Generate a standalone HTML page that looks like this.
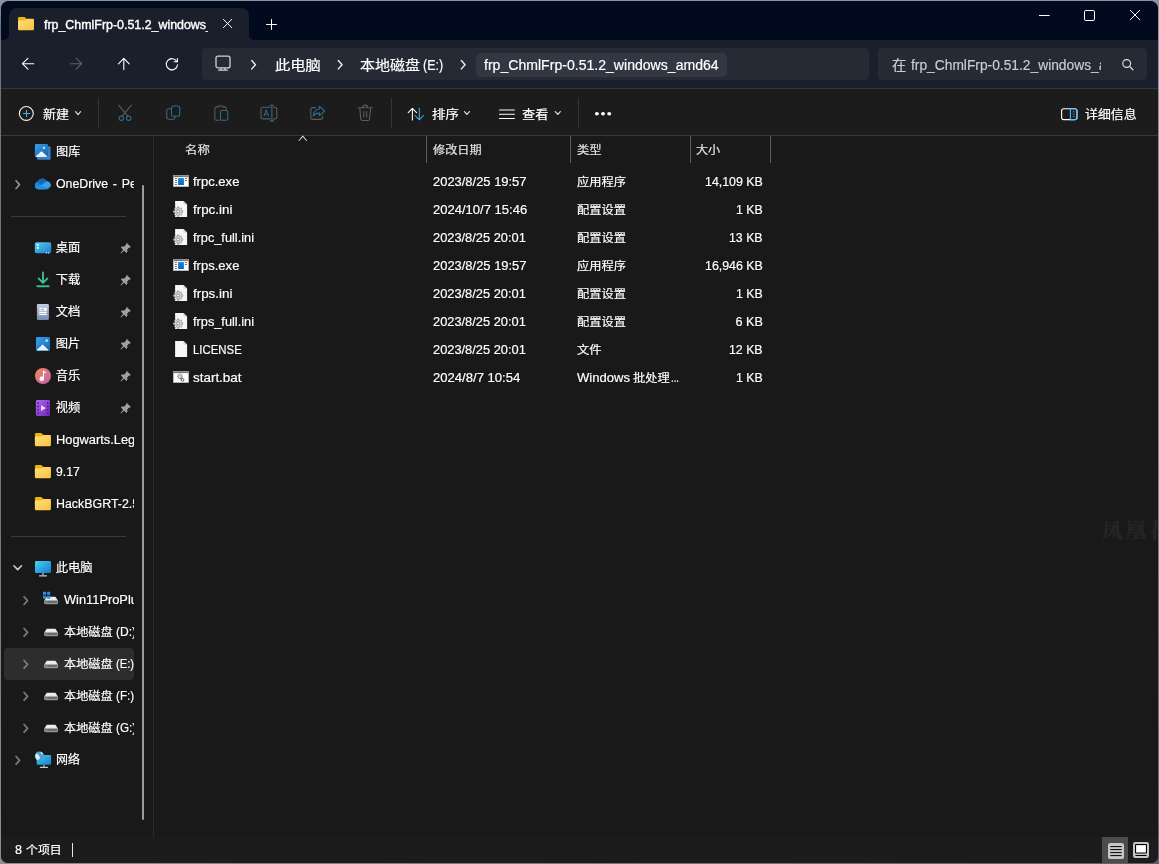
<!DOCTYPE html>
<html lang="zh-CN">
<head>
<meta charset="utf-8">
<title>frp_ChmlFrp-0.51.2_windows_amd64</title>
<style>
*{box-sizing:border-box;margin:0;padding:0}
html,body{width:1159px;height:864px;overflow:hidden}
body{background:#8b93a3;font-family:"Liberation Sans","Noto Sans CJK SC",sans-serif;font-size:12px;color:#fff;position:relative}
#win{position:absolute;left:1px;top:1px;width:1157px;height:862px;border-radius:8px 8px 7px 7px;overflow:hidden;background:#191919}
#o{will-change:transform;position:absolute;left:-1px;top:-1px;width:1159px;height:864px}
#o div,#o span,#o svg{position:absolute}
.t{-webkit-text-stroke:.18px currentColor;white-space:pre;line-height:20px;height:20px;transform-origin:0 50%}
.clip{overflow:hidden}
svg{overflow:visible}
</style>
</head>
<body>
<div style="position:absolute;left:0;top:6px;width:2px;height:858px;background:linear-gradient(180deg,#858c9a 0,#6f7379 20px,#74767b 60%,#8d8e94 100%)"></div>
<div style="position:absolute;left:1157px;top:6px;width:2px;height:858px;background:linear-gradient(180deg,#8b93a3 0,#7d8190 50%,#5d5f70 100%)"></div>
<div style="position:absolute;left:0;top:856px;width:1159px;height:8px;background:linear-gradient(90deg,#8d8e94 0,#74767f 50%,#5d5f70 100%)"></div>
<div id="win"><div id="o">
<div style="left:0px;top:0px;width:1159px;height:40px;background:#020a20;"></div>
<div style="left:8.5px;top:8px;width:240.5px;height:32px;background:#1a1f2b;border-radius:8px 8px 0 0"></div>
<svg style="left:3.5px;top:35px" width="5" height="5" viewBox="0 0 8 8"><path d="M8 0V8H0A8 8 0 0 0 8 0z" fill="#1a1f2b"/></svg>
<svg style="left:249px;top:35px" width="5" height="5" viewBox="0 0 8 8"><path d="M0 0V8H8A8 8 0 0 1 0 0z" fill="#1a1f2b"/></svg>
<svg style="left:18px;top:16px" width="17" height="14.5" viewBox="0 0 17 14.5"><g transform="translate(0 0.7)"><defs><linearGradient id="g1" x1="0" y1="0" x2="1" y2="1"><stop offset="0" stop-color="#ffe07a"/><stop offset="1" stop-color="#f6c23c"/></linearGradient></defs><path d="M0 1.6A1.4 1.4 0 0 1 1.4 .2H6a1.4 1.4 0 0 1 1 .4L8.6 2.2h6A1.4 1.4 0 0 1 16 3.6V8H0z" fill="#eeb21c"/><path d="M0 5A1.3 1.3 0 0 1 1.3 3.7H6.2a1.6 1.6 0 0 0 1.1-.45L8 2.6a1.6 1.6 0 0 1 1.1-.45h5.6A1.3 1.3 0 0 1 16 3.45v8.75a1.3 1.3 0 0 1-1.3 1.3H1.3A1.3 1.3 0 0 1 0 12.2z" fill="url(#g1)"/></g></svg>
<div class="clip" style="left:40.00px;top:15.28px;width:167.60px;height:20px;"><span class="t" style="left:3.90px;top:0;font-size:13px;color:#fff;transform:scaleX(0.9541);font-weight:400;-webkit-text-stroke:.4px #fff;">frp_ChmlFrp-0.51.2_windows_</span></div>
<svg style="left:219px;top:15px" width="17" height="17" viewBox="0 0 17 17"><g transform="translate(0.6 0.5)"><path d="M3.80 3.80L12.20 12.20M12.20 3.80L3.80 12.20" stroke="#fff" stroke-width="1.0" stroke-linecap="round"/></g></svg>
<svg style="left:263px;top:16px" width="17" height="17" viewBox="0 0 17 17"><g transform="translate(0.5 0.5)"><path d="M8 3.00V13.00M3.00 8H13.00" stroke="#fff" stroke-width="1.0" stroke-linecap="round"/></g></svg>
<svg style="left:1038.500px;top:14.900px" width="11" height="1" viewBox="0 0 11 1"><rect width="10.600" height="1" fill="#fff"/></svg>
<svg style="left:1083.500px;top:9.500px" width="11" height="11" viewBox="0 0 11 11"><rect x=".5" y=".5" width="10" height="10" rx="1.300" fill="none" stroke="#fff" stroke-width="1"/></svg>
<svg style="left:1127px;top:7px" width="17" height="17" viewBox="0 0 17 17"><path d="M3.30 3.30L12.70 12.70M12.70 3.30L3.30 12.70" stroke="#fff" stroke-width="1.0" stroke-linecap="round"/></svg>
<div style="left:0px;top:40px;width:1159px;height:48px;background:#1a1f2b;"></div>
<div style="left:0px;top:88px;width:1159px;height:1px;background:#33363e;"></div>
<svg style="left:20px;top:55px" width="17" height="17" viewBox="0 0 17 17"><g transform="translate(0 0.7)"><path d="M13.7 8H2.5M7.9 2.6L2.4 8l5.5 5.4" fill="none" stroke="#fff" stroke-width="1.1" stroke-linecap="round" stroke-linejoin="round"/></g></svg>
<svg style="left:68px;top:55px" width="17" height="17" viewBox="0 0 17 17"><g transform="translate(0.1 0.7)"><path d="M2.3 8H13.5M8.1 2.6L13.6 8l-5.500 5.400" fill="none" stroke="#5f636d" stroke-width="1.1" stroke-linecap="round" stroke-linejoin="round"/></g></svg>
<svg style="left:115px;top:56px" width="17" height="17" viewBox="0 0 17 17"><g transform="translate(0.8 0)"><path d="M8 13.600V2.500M2.600 7.900L8 2.400l5.400 5.500" fill="none" stroke="#fff" stroke-width="1.1" stroke-linecap="round" stroke-linejoin="round"/></g></svg>
<svg style="left:164px;top:56px" width="17" height="17" viewBox="0 0 17 17"><path d="M13.500 8.700A5.600 5.600 0 1 1 12.900 5.700" fill="none" stroke="#fff" stroke-width="1.1" stroke-linecap="round"/><path d="M13.400 2.500V5.800H10.200" fill="none" stroke="#fff" stroke-width="1.1" stroke-linecap="round" stroke-linejoin="round"/></svg>
<div style="left:202px;top:48px;width:667px;height:32px;background:#252a35;border-radius:4px"></div>
<svg style="left:215px;top:55px" width="17" height="17" viewBox="0 0 17 17"><g transform="translate(0.3 0.4)"><rect x=".7" y=".7" width="14" height="11.800" rx="2" fill="none" stroke="#d0d3da" stroke-width="1.3"/><path d="M5.800 12.700v1.800M9.600 12.700v1.800" stroke="#d0d3da" stroke-width="1.2" fill="none"/><path d="M3.300 14.700h8.800" stroke="#d0d3da" stroke-width="1.200" stroke-linecap="round" fill="none"/></g></svg>
<svg style="left:248px;top:58px" width="11" height="13" viewBox="0 0 11 13"><g transform="translate(0.6 0.7)"><path d="M3.14 1.82L6.86 6L3.14 10.18" fill="none" stroke="#ececf0" stroke-width="1.45" stroke-linecap="round" stroke-linejoin="round"/></g></svg>
<span class="t" style="left:275.30px;top:55.09px;font-size:14px;color:#fff;transform:scaleX(1.0905);">此电脑</span>
<svg style="left:335px;top:58px" width="11" height="13" viewBox="0 0 11 13"><g transform="translate(0.2 0.7)"><path d="M3.14 1.82L6.86 6L3.14 10.18" fill="none" stroke="#ececf0" stroke-width="1.45" stroke-linecap="round" stroke-linejoin="round"/></g></svg>
<span class="t" style="left:360.00px;top:55.09px;font-size:14px;color:#fff;transform:scaleX(1.0714);">本地磁盘</span>
<span class="t" style="left:423.00px;top:55.09px;font-size:14px;color:#fff;transform:scaleX(0.8909);">(E:)</span>
<svg style="left:458px;top:58px" width="11" height="13" viewBox="0 0 11 13"><g transform="translate(0.2 0.7)"><path d="M3.14 1.82L6.86 6L3.14 10.18" fill="none" stroke="#ececf0" stroke-width="1.45" stroke-linecap="round" stroke-linejoin="round"/></g></svg>
<div style="left:475.5px;top:53px;width:251px;height:24.3px;background:#323743;border-radius:5px"></div>
<span class="t" style="left:483.80px;top:55.09px;font-size:14px;color:#fff;transform:scaleX(1.0053);">frp_ChmlFrp-0.51.2_windows_amd64</span>
<div style="left:877.5px;top:48px;width:269.5px;height:32px;background:#252a35;border-radius:4px"></div>
<span class="t" style="left:891.80px;top:56.18px;font-size:13.6px;color:#c9ccd3;transform:scaleX(1.0520);">在</span>
<div class="clip" style="left:890.00px;top:55.09px;width:211.20px;height:20px;"><span class="t" style="left:20.70px;top:0;font-size:14px;color:#c9ccd3;transform:scaleX(0.9847);">frp_ChmlFrp-0.51.2_windows_a</span></div>
<svg style="left:1122px;top:58px" width="13" height="13" viewBox="0 0 13 13"><g transform="translate(0.1 0.9)"><circle cx="4.600" cy="4.600" r="3.900" fill="none" stroke="#e0e2e8" stroke-width="1.15"/><path d="M7.500 7.500L10.800 10.800" stroke="#e0e2e8" stroke-width="1.3" stroke-linecap="round"/></g></svg>
<div style="left:0px;top:89px;width:1159px;height:46px;background:#1c1c1c;"></div>
<div style="left:0px;top:135px;width:1159px;height:1px;background:#393939;"></div>
<svg style="left:18px;top:105px" width="18" height="18" viewBox="0 0 18 18"><circle cx="8.300" cy="8.450" r="6.950" fill="none" stroke="#f4f4f4" stroke-width="1.1"/><path d="M8.500 5v7M5 8.500h7" stroke="#45b4f0" stroke-width="1" stroke-linecap="butt"/></svg>
<span class="t" style="left:42.70px;top:104.97px;font-size:12.4px;color:#fff;transform:scaleX(1.0492);-webkit-text-stroke:.2px #fff;">新建</span>
<svg style="left:72px;top:108px" width="13" height="11" viewBox="0 0 13 11"><g transform="translate(0.05 0.1)"><path d="M3.50 3.55L6 6.45L8.50 3.55" fill="none" stroke="#d8d8d8" stroke-width="1.25" stroke-linecap="round" stroke-linejoin="round"/></g></svg>
<div style="left:98px;top:98px;width:1px;height:30px;background:#333;"></div>
<svg style="left:117px;top:104px" width="17" height="19" viewBox="0 0 17 19"><path d="M1.600 1.200L11 12.300M14.400 1.200L5 12.300" stroke="#5c5c5c" stroke-width="1.1" stroke-linecap="round" fill="none"/><circle cx="4.300" cy="14.200" r="2.200" fill="none" stroke="#2d6d90" stroke-width="1.1"/><circle cx="11.700" cy="14.200" r="2.200" fill="none" stroke="#2d6d90" stroke-width="1.1"/></svg>
<svg style="left:165px;top:105px" width="17" height="17" viewBox="0 0 17 17"><g transform="translate(0.2 0)"><path d="M5.3 3.8H3.3A1.8 1.8 0 0 0 1.5 5.6v6.8a1.8 1.8 0 0 0 1.8 1.8h4.6a1.8 1.8 0 0 0 1.8-1.8v-1" fill="none" stroke="#5c5c5c" stroke-width="1.1" stroke-linecap="round"/><rect x="6.3" y="1" width="8.2" height="10.2" rx="1.8" fill="none" stroke="#2d6d90" stroke-width="1.1"/></g></svg>
<svg style="left:213px;top:105px" width="16.2" height="17.1" viewBox="0 0 17.053 18.056"><g transform="translate(0.421 0)"><path d="M6 16H3.3A1.8 1.8 0 0 1 1.5 14.2V3.8A1.8 1.8 0 0 1 3.3 2H5.2M9.8 2h1.9a1.8 1.8 0 0 1 1.8 1.8v1.3" fill="none" stroke="#5c5c5c" stroke-width="1.1" stroke-linecap="round"/><path d="M5 2.4A1.7 1.7 0 0 1 6.7 .8h1.6A1.7 1.7 0 0 1 10 2.4" fill="none" stroke="#5c5c5c" stroke-width="1.1"/><rect x="7.4" y="5.8" width="7.8" height="10.4" rx="1.6" fill="none" stroke="#2d6d90" stroke-width="1.1"/></g></svg>
<svg style="left:260px;top:104px" width="19" height="18" viewBox="0 0 19 18"><g transform="translate(0 0.5)"><path d="M10.2 14.4H3.2A2.2 2.2 0 0 1 1 12.2V5A2.2 2.2 0 0 1 3.2 2.8h7M13.6 2.8h1A2.2 2.2 0 0 1 16.8 5v7.2a2.2 2.2 0 0 1-2.2 2.2h-1" fill="none" stroke="#5c5c5c" stroke-width="1.1" stroke-linecap="round"/><path d="M4 11.6L6.3 5.4 8.6 11.6M4.8 9.6h3" fill="none" stroke="#2d6d90" stroke-width="1" stroke-linecap="round" stroke-linejoin="round"/><path d="M11.9 1V16.2M10.2 .8h3.4M10.2 16.4h3.4" stroke="#2d6d90" stroke-width="1.1" stroke-linecap="round"/></g></svg>
<svg style="left:309px;top:105px" width="17" height="17" viewBox="0 0 17 17"><g transform="translate(0.4 0.4)"><path d="M6 2.2H3.6A2.2 2.2 0 0 0 1.4 4.4v7.4A2.2 2.2 0 0 0 3.6 14h7.4a2.2 2.2 0 0 0 2.2-2.2V11" fill="none" stroke="#5c5c5c" stroke-width="1.1" stroke-linecap="round"/><path d="M10 .9L15.3 5.6 10 10.3V7.7C6.8 7.6 5 8.6 3.8 10.6 4 7 6 4 10 3.6z" fill="none" stroke="#2d6d90" stroke-width="1.1" stroke-linejoin="round"/></g></svg>
<svg style="left:357px;top:104px" width="17" height="18" viewBox="0 0 17 18"><g transform="translate(0.2 0.5)"><path d="M.9 3.2H15.1M5.6 3A2.4 2.4 0 0 1 10.4 3M2.6 3.4l1 11A1.8 1.8 0 0 0 5.4 16h5.2a1.8 1.8 0 0 0 1.8-1.6l1-11M6.6 6.8v5.6M9.4 6.8v5.6" fill="none" stroke="#5c5c5c" stroke-width="1.1" stroke-linecap="round"/></g></svg>
<div style="left:391px;top:98px;width:1px;height:30px;background:#333;"></div>
<svg style="left:407px;top:107px" width="18" height="15" viewBox="0 0 18 15"><g transform="translate(0.7 0.1)"><path d="M4.700 12.800V1.300M.5 5.500L4.700 1.200 8.900 5.500" fill="none" stroke="#fff" stroke-width="1.05" stroke-linecap="round" stroke-linejoin="round"/><path d="M11.600 1.100V12.600M7.400 8.400l4.200 4.300 4.200-4.300" fill="none" stroke="#45aae4" stroke-width="1.05" stroke-linecap="round" stroke-linejoin="round"/></g></svg>
<span class="t" style="left:431.50px;top:104.97px;font-size:12.4px;color:#fff;transform:scaleX(1.0815);-webkit-text-stroke:.2px #fff;">排序</span>
<svg style="left:460px;top:108px" width="13" height="11" viewBox="0 0 13 11"><g transform="translate(0.9 0)"><path d="M3.50 3.55L6 6.45L8.50 3.55" fill="none" stroke="#d8d8d8" stroke-width="1.25" stroke-linecap="round" stroke-linejoin="round"/></g></svg>
<svg style="left:498px;top:108px" width="19" height="13" viewBox="0 0 19 13"><path d="M1.500 1.900H16.400M1.500 6.300H16.400M1.500 10.500H16.400" stroke="#fff" stroke-width="1.05" stroke-linecap="round"/></svg>
<span class="t" style="left:522.40px;top:104.97px;font-size:12.4px;color:#fff;transform:scaleX(1.0613);-webkit-text-stroke:.2px #fff;">查看</span>
<svg style="left:551px;top:108px" width="13" height="11" viewBox="0 0 13 11"><g transform="translate(0.8 0)"><path d="M3.50 3.55L6 6.45L8.50 3.55" fill="none" stroke="#d8d8d8" stroke-width="1.25" stroke-linecap="round" stroke-linejoin="round"/></g></svg>
<div style="left:578px;top:98px;width:1px;height:30px;background:#333;"></div>
<svg style="left:594px;top:111px" width="19" height="6" viewBox="0 0 19 6"><g transform="translate(0 0.2)"><ellipse cx="2.900" cy="2.500" rx="2" ry="1.700" fill="#fff"/><ellipse cx="9" cy="2.500" rx="2" ry="1.700" fill="#fff"/><ellipse cx="15.200" cy="2.500" rx="2" ry="1.700" fill="#fff"/></g></svg>
<svg style="left:1061px;top:108px" width="18" height="13" viewBox="0 0 18 13"><g transform="translate(0 0.2)"><rect x=".6" y=".6" width="15.4" height="10.8" rx="2.2" fill="none" stroke="#fff" stroke-width="1.1"/><path d="M9.4 .6h4.4A2.2 2.2 0 0 1 16 2.8v6.4a2.2 2.2 0 0 1-2.2 2.2H9.4z" fill="none" stroke="#4cc2ff" stroke-width="1.1"/><path d="M11.700 3.600h2M11.700 6h2M11.700 8.400h2" stroke="#4cc2ff" stroke-width=".7"/></g></svg>
<span class="t" style="left:1084.60px;top:104.97px;font-size:12.4px;color:#fff;transform:scaleX(1.0391);-webkit-text-stroke:.2px #fff;">详细信息</span>
<div style="left:153px;top:136px;width:1px;height:701px;background:#2c2c2c;"></div>
<svg style="left:34px;top:143px" width="18" height="18" viewBox="0 0 18 18"><g transform="translate(0.6 0.6)"><defs><linearGradient id="g2" x1="0" y1="0" x2="1" y2="1"><stop offset="0" stop-color="#3aa0e8"/><stop offset="1" stop-color="#1560a8"/></linearGradient></defs><rect x="2.4" y="2.6" width="13.6" height="13.6" rx="1.3" fill="#3b7fc4"/><rect x=".3" y=".5" width="13.2" height="13.2" rx="1.3" fill="url(#g2)"/><path d="M1 13.2L6.9 7.6l5.9 5.6z" fill="#fff"/><path d="M1 13.2l3-2.8h5.8l3 2.8z" fill="#e4effa"/><rect x="8.3" y="3.2" width="2.2" height="2.2" fill="#9fe6ff"/></g></svg>
<span class="t" style="left:56.10px;top:141.77px;font-size:12.3px;color:#fff;transform:scaleX(0.9915);">图库</span>
<svg style="left:12px;top:178px" width="11" height="13" viewBox="0 0 11 13"><g transform="translate(0.8 0.6)"><path d="M3.27 2.11L6.73 6L3.27 9.89" fill="none" stroke="#8c8c8c" stroke-width="1.7" stroke-linecap="round" stroke-linejoin="round"/></g></svg>
<svg style="left:34px;top:178px" width="18" height="12.4" viewBox="0 0 18 12.4"><g transform="translate(0.2 0)"><path d="M4.3 11.2A3.9 3.9 0 0 1 3.6 3.5 5 5 0 0 1 12.6 3.3 4.1 4.1 0 0 1 13.1 11.2z" fill="#1a86d8"/><path d="M3.6 3.5A5 5 0 0 1 12.6 3.3l-6 4.2z" fill="#1268b8"/><path d="M6.3 7.6l6.3-4.3A4.1 4.1 0 0 1 16.6 8.6L9.6 11.2H4.3A3.9 3.9 0 0 1 .9 9.2z" fill="#3c9fe8"/><path d="M1 9.3l5.3-1.7 8.6 2.9a4 4 0 0 1-1.8 .7H4.3A3.9 3.9 0 0 1 1 9.3z" fill="#2390e0"/></g></svg>
<div class="clip" style="left:50.00px;top:173.57px;width:84.00px;height:20px;"><span class="t" style="left:5.90px;top:0;font-size:12.5px;color:#fff;transform:scaleX(0.9878);word-spacing:1.3px;">OneDrive - Pe</span></div>
<div style="left:11px;top:216px;width:115px;height:1px;background:#3a3a3a;"></div>
<svg style="left:34px;top:242px" width="18" height="13" viewBox="0 0 18 13"><g transform="translate(0.6 0)"><defs><linearGradient id="g3" x1="0" y1="0" x2="1" y2="1"><stop offset="0" stop-color="#58d0f4"/><stop offset="1" stop-color="#1b7cc4"/></linearGradient></defs><rect x=".2" y=".2" width="16.4" height="11" rx="1.6" fill="url(#g3)"/><rect x="2.2" y="2" width="2" height="1.8" fill="#e8fbff"/><rect x="2.2" y="5" width="2" height="1.8" fill="#e8fbff"/><rect x="11.3" y="10.4" width="1.1" height="1.1" fill="#e8fbff"/><rect x="13.5" y="10.4" width="1.1" height="1.1" fill="#e8fbff"/></g></svg>
<span class="t" style="left:55.70px;top:237.67px;font-size:12.3px;color:#fff;">桌面</span>
<svg style="left:120px;top:242px" width="12" height="12" viewBox="0 0 12 12"><g transform="translate(0.3 0.5)"><path d="M6.600 .4L10.600 4.400 9.700 5.300 8.900 5.100 6.900 7.100 7.100 9.500 6.100 10.500 3.800 8.200 .6 10.900 .2 10.500 2.900 7.300 .5 4.900 1.500 3.900 3.900 4.100 5.900 2.100 5.700 1.300z" fill="#9aa0a6"/></g></svg>
<svg style="left:37px;top:271px" width="13" height="17" viewBox="0 0 13 17"><g transform="translate(0 0.6)"><path d="M6 .8V11M1.6 6.8L6 11.2l4.4-4.4" fill="none" stroke="#3fc49c" stroke-width="1.8" stroke-linecap="round" stroke-linejoin="round"/><path d="M.3 14.6H11.7" stroke="#36b98f" stroke-width="1.9" stroke-linecap="round"/></g></svg>
<span class="t" style="left:55.70px;top:269.67px;font-size:12.3px;color:#fff;">下载</span>
<svg style="left:120px;top:274px" width="12" height="12" viewBox="0 0 12 12"><g transform="translate(0.3 0.5)"><path d="M6.600 .4L10.600 4.400 9.700 5.300 8.900 5.100 6.900 7.100 7.100 9.500 6.100 10.500 3.800 8.200 .6 10.900 .2 10.500 2.900 7.300 .5 4.900 1.500 3.900 3.900 4.100 5.900 2.100 5.700 1.300z" fill="#9aa0a6"/></g></svg>
<svg style="left:36px;top:304px" width="13" height="17" viewBox="0 0 13 17"><g transform="translate(0.9 0)"><defs><linearGradient id="g4" x1="0" y1="0" x2="0" y2="1"><stop offset="0" stop-color="#c2cee2"/><stop offset="1" stop-color="#748bb0"/></linearGradient></defs><rect x="0" y="0" width="12" height="16" rx="1.3" fill="url(#g4)"/><path d="M2.3 4.4h3.4M2.3 6.3h3.4M2.3 8.4h7.4M2.3 10.4h7.4" stroke="#fff" stroke-width="1.1"/><rect x="6.8" y="3.8" width="3" height="3" fill="#fff"/></g></svg>
<span class="t" style="left:55.70px;top:301.67px;font-size:12.3px;color:#fff;">文档</span>
<svg style="left:120px;top:306px" width="12" height="12" viewBox="0 0 12 12"><g transform="translate(0.3 0.5)"><path d="M6.600 .4L10.600 4.400 9.700 5.300 8.900 5.100 6.900 7.100 7.100 9.500 6.100 10.500 3.800 8.200 .6 10.900 .2 10.500 2.900 7.300 .5 4.900 1.500 3.900 3.900 4.100 5.900 2.100 5.700 1.300z" fill="#9aa0a6"/></g></svg>
<svg style="left:36px;top:337px" width="15" height="15" viewBox="0 0 15 15"><g transform="translate(0 0.1)"><defs><linearGradient id="g5" x1="0" y1="0" x2="1" y2="1"><stop offset="0" stop-color="#35a2ec"/><stop offset="1" stop-color="#1568b8"/></linearGradient></defs><rect width="14" height="14" rx="1.4" fill="url(#g5)"/><path d="M.8 13.2L6.6 7.3l5.9 5.9z" fill="#fff"/><path d="M.8 13.2l2.8-2.8h6l2.9 2.8z" fill="#e2eefb"/><rect x="9.6" y="2.4" width="2.2" height="2.2" fill="#b8f0ff"/></g></svg>
<span class="t" style="left:55.70px;top:333.67px;font-size:12.3px;color:#fff;">图片</span>
<svg style="left:120px;top:338px" width="12" height="12" viewBox="0 0 12 12"><g transform="translate(0.3 0.5)"><path d="M6.600 .4L10.600 4.400 9.700 5.300 8.900 5.100 6.900 7.100 7.100 9.500 6.100 10.500 3.800 8.200 .6 10.900 .2 10.500 2.900 7.300 .5 4.900 1.500 3.900 3.900 4.100 5.900 2.100 5.700 1.300z" fill="#9aa0a6"/></g></svg>
<svg style="left:35px;top:368px" width="17" height="17" viewBox="0 0 17 17"><defs><linearGradient id="g6" x1="0" y1="0" x2="1" y2="1"><stop offset="0" stop-color="#f48a58"/><stop offset="1" stop-color="#c060b4"/></linearGradient></defs><circle cx="8" cy="8" r="8" fill="url(#g6)"/><path d="M8 2.800c1.800.3 2.900 1.200 3.200 2.800-.9-.7-1.600-.9-2.200-.9v6a2.200 2.200 0 1 1-1-1.800V2.800z" fill="#fff"/></svg>
<span class="t" style="left:55.70px;top:365.67px;font-size:12.3px;color:#fff;">音乐</span>
<svg style="left:120px;top:370px" width="12" height="12" viewBox="0 0 12 12"><g transform="translate(0.3 0.5)"><path d="M6.600 .4L10.600 4.400 9.700 5.300 8.900 5.100 6.900 7.100 7.100 9.500 6.100 10.500 3.800 8.200 .6 10.900 .2 10.500 2.900 7.300 .5 4.900 1.500 3.900 3.900 4.100 5.900 2.100 5.700 1.300z" fill="#9aa0a6"/></g></svg>
<svg style="left:35px;top:400px" width="15" height="17" viewBox="0 0 15 17"><g transform="translate(0.9 0)"><defs><linearGradient id="g7" x1="0" y1="0" x2="1" y2="1"><stop offset="0" stop-color="#b066ee"/><stop offset="1" stop-color="#7028bc"/></linearGradient></defs><rect width="14" height="16" rx="1.4" fill="url(#g7)"/><rect x="1.3" y="2.2" width="1.7" height="1.7" rx=".4" fill="#4a1a88"/><rect x="11" y="2.2" width="1.7" height="1.7" rx=".4" fill="#4a1a88"/><rect x="1.3" y="5.6" width="1.7" height="1.7" rx=".4" fill="#4a1a88"/><rect x="11" y="5.6" width="1.7" height="1.7" rx=".4" fill="#4a1a88"/><rect x="1.3" y="9" width="1.7" height="1.7" rx=".4" fill="#4a1a88"/><rect x="11" y="9" width="1.7" height="1.7" rx=".4" fill="#4a1a88"/><rect x="1.3" y="12.4" width="1.7" height="1.7" rx=".4" fill="#4a1a88"/><rect x="11" y="12.4" width="1.7" height="1.7" rx=".4" fill="#4a1a88"/><path d="M5.2 5.2L10 8.1 5.2 11z" fill="#f6dcff"/></g></svg>
<span class="t" style="left:55.70px;top:397.67px;font-size:12.3px;color:#fff;">视频</span>
<svg style="left:120px;top:402px" width="12" height="12" viewBox="0 0 12 12"><g transform="translate(0.3 0.5)"><path d="M6.600 .4L10.600 4.400 9.700 5.300 8.900 5.100 6.900 7.100 7.100 9.500 6.100 10.500 3.800 8.200 .6 10.900 .2 10.500 2.900 7.300 .5 4.900 1.500 3.900 3.900 4.100 5.900 2.100 5.700 1.300z" fill="#9aa0a6"/></g></svg>
<svg style="left:34px;top:432px" width="17" height="14.5" viewBox="0 0 17 14.5"><g transform="translate(0.9 0.8)"><defs><linearGradient id="g8" x1="0" y1="0" x2="1" y2="1"><stop offset="0" stop-color="#ffe07a"/><stop offset="1" stop-color="#f6c23c"/></linearGradient></defs><path d="M0 1.6A1.4 1.4 0 0 1 1.4 .2H6a1.4 1.4 0 0 1 1 .4L8.6 2.2h6A1.4 1.4 0 0 1 16 3.6V8H0z" fill="#eeb21c"/><path d="M0 5A1.3 1.3 0 0 1 1.3 3.7H6.2a1.6 1.6 0 0 0 1.1-.45L8 2.6a1.6 1.6 0 0 1 1.1-.45h5.6A1.3 1.3 0 0 1 16 3.45v8.75a1.3 1.3 0 0 1-1.3 1.3H1.3A1.3 1.3 0 0 1 0 12.2z" fill="url(#g8)"/></g></svg>
<div class="clip" style="left:50.00px;top:429.97px;width:84.00px;height:20px;"><span class="t" style="left:6.30px;top:0;font-size:12.5px;color:#fff;transform:scaleX(1.0269);">Hogwarts.Leg</span></div>
<svg style="left:34px;top:464px" width="17" height="14.5" viewBox="0 0 17 14.5"><g transform="translate(0.9 0.8)"><defs><linearGradient id="g9" x1="0" y1="0" x2="1" y2="1"><stop offset="0" stop-color="#ffe07a"/><stop offset="1" stop-color="#f6c23c"/></linearGradient></defs><path d="M0 1.6A1.4 1.4 0 0 1 1.4 .2H6a1.4 1.4 0 0 1 1 .4L8.6 2.2h6A1.4 1.4 0 0 1 16 3.6V8H0z" fill="#eeb21c"/><path d="M0 5A1.3 1.3 0 0 1 1.3 3.7H6.2a1.6 1.6 0 0 0 1.1-.45L8 2.6a1.6 1.6 0 0 1 1.1-.45h5.6A1.3 1.3 0 0 1 16 3.45v8.75a1.3 1.3 0 0 1-1.3 1.3H1.3A1.3 1.3 0 0 1 0 12.2z" fill="url(#g9)"/></g></svg>
<div class="clip" style="left:50.00px;top:461.97px;width:84.00px;height:20px;"><span class="t" style="left:6.30px;top:0;font-size:12.5px;color:#fff;transform:scaleX(0.9736);">9.17</span></div>
<svg style="left:34px;top:496px" width="17" height="14.5" viewBox="0 0 17 14.5"><g transform="translate(0.9 0.8)"><defs><linearGradient id="g10" x1="0" y1="0" x2="1" y2="1"><stop offset="0" stop-color="#ffe07a"/><stop offset="1" stop-color="#f6c23c"/></linearGradient></defs><path d="M0 1.6A1.4 1.4 0 0 1 1.4 .2H6a1.4 1.4 0 0 1 1 .4L8.6 2.2h6A1.4 1.4 0 0 1 16 3.6V8H0z" fill="#eeb21c"/><path d="M0 5A1.3 1.3 0 0 1 1.3 3.7H6.2a1.6 1.6 0 0 0 1.1-.45L8 2.6a1.6 1.6 0 0 1 1.1-.45h5.6A1.3 1.3 0 0 1 16 3.45v8.75a1.3 1.3 0 0 1-1.3 1.3H1.3A1.3 1.3 0 0 1 0 12.2z" fill="url(#g10)"/></g></svg>
<div class="clip" style="left:50.00px;top:493.97px;width:84.00px;height:20px;"><span class="t" style="left:6.30px;top:0;font-size:12.5px;color:#fff;transform:scaleX(0.9925);">HackBGRT-2.5</span></div>
<div style="left:11px;top:536px;width:115px;height:1px;background:#3a3a3a;"></div>
<svg style="left:11px;top:562px" width="13" height="11" viewBox="0 0 13 11"><g transform="translate(0.7 0.7)"><path d="M2.20 3.10L6 6.90L9.80 3.10" fill="none" stroke="#cdcdcd" stroke-width="1.6" stroke-linecap="round" stroke-linejoin="round"/></g></svg>
<svg style="left:35px;top:561px" width="17" height="16.5" viewBox="0 0 17 16.5"><defs><linearGradient id="g11" x1="0" y1="0" x2="1" y2="1"><stop offset="0" stop-color="#4ad2f4"/><stop offset="1" stop-color="#157acc"/></linearGradient></defs><rect x="0" y="0" width="16" height="12" rx="1.2" fill="url(#g11)"/><rect x="7.2" y="12" width="1.6" height="2.4" fill="#9aa6b4"/><rect x="4" y="14.2" width="8" height="1.2" rx=".4" fill="#c4ccd6"/></svg>
<span class="t" style="left:55.70px;top:557.67px;font-size:12.3px;color:#fff;">此电脑</span>
<svg style="left:20px;top:594px" width="11" height="13" viewBox="0 0 11 13"><g transform="translate(0.8 0.6)"><path d="M3.27 2.11L6.73 6L3.27 9.89" fill="none" stroke="#7c7c7c" stroke-width="1.7" stroke-linecap="round" stroke-linejoin="round"/></g></svg>
<svg style="left:44px;top:592px" width="15" height="13" viewBox="0 0 15 13"><g transform="translate(0.1 0.2)"><g transform="translate(0,4.300)"><path d="M2.700 .2h8.600L13.800 4H.2z" fill="#ececec"/><rect x=".5" y="3.900" width="13" height="3.300" rx=".8" fill="#6b6b6b" stroke="#cdcdcd" stroke-width=".7"/><rect x="2.500" y="5" width="1.300" height="1" fill="#35d04a"/></g><rect x="-1.100" y="-.4" width="3.100" height="3" fill="#2f8fe0"/><rect x="3" y="-.4" width="3.100" height="3" fill="#2f8fe0"/><rect x="-1.100" y="3.500" width="3.100" height="3" fill="#2f8fe0"/><rect x="3" y="3.500" width="3.100" height="3" fill="#2f8fe0"/></g></svg>
<div class="clip" style="left:60.00px;top:590.37px;width:74.00px;height:20px;"><span class="t" style="left:4.10px;top:0;font-size:12.5px;color:#fff;transform:scaleX(1.0259);">Win11ProPlu</span></div>
<div style="left:4px;top:648px;width:130px;height:32px;background:#2d2d2d;border-radius:4px"></div>
<svg style="left:20px;top:626px" width="11" height="13" viewBox="0 0 11 13"><g transform="translate(0.8 0.4)"><path d="M3.27 2.11L6.73 6L3.27 9.89" fill="none" stroke="#7c7c7c" stroke-width="1.7" stroke-linecap="round" stroke-linejoin="round"/></g></svg>
<svg style="left:44px;top:628px" width="15" height="8.8" viewBox="0 0 15 8.8"><g transform="translate(0.1 0.5)"><path d="M2.700 .2h8.600L13.800 4H.2z" fill="#ececec"/><rect x=".5" y="3.900" width="13" height="3.300" rx=".8" fill="#6b6b6b" stroke="#cdcdcd" stroke-width=".7"/><rect x="2.500" y="5" width="1.300" height="1" fill="#35d04a"/></g></svg>
<span class="t" style="left:63.70px;top:622.46px;font-size:11.6px;color:#fff;transform:scaleX(1.0498);">本地磁盘</span>
<div class="clip" style="left:110.00px;top:621.67px;width:24.00px;height:20px;"><span class="t" style="left:6.40px;top:0;font-size:12.5px;color:#fff;transform:scaleX(0.9650);">(D:)</span></div>
<svg style="left:20px;top:658px" width="11" height="13" viewBox="0 0 11 13"><g transform="translate(0.8 0.4)"><path d="M3.27 2.11L6.73 6L3.27 9.89" fill="none" stroke="#7c7c7c" stroke-width="1.7" stroke-linecap="round" stroke-linejoin="round"/></g></svg>
<svg style="left:44px;top:660px" width="15" height="8.8" viewBox="0 0 15 8.8"><g transform="translate(0.1 0.5)"><path d="M2.700 .2h8.600L13.800 4H.2z" fill="#ececec"/><rect x=".5" y="3.900" width="13" height="3.300" rx=".8" fill="#6b6b6b" stroke="#cdcdcd" stroke-width=".7"/><rect x="2.500" y="5" width="1.300" height="1" fill="#35d04a"/></g></svg>
<span class="t" style="left:63.70px;top:654.46px;font-size:11.6px;color:#fff;transform:scaleX(1.0498);">本地磁盘</span>
<div class="clip" style="left:110.00px;top:653.67px;width:24.00px;height:20px;"><span class="t" style="left:6.40px;top:0;font-size:12.5px;color:#fff;transform:scaleX(0.8987);">(E:)</span></div>
<svg style="left:20px;top:690px" width="11" height="13" viewBox="0 0 11 13"><g transform="translate(0.8 0.4)"><path d="M3.27 2.11L6.73 6L3.27 9.89" fill="none" stroke="#7c7c7c" stroke-width="1.7" stroke-linecap="round" stroke-linejoin="round"/></g></svg>
<svg style="left:44px;top:692px" width="15" height="8.8" viewBox="0 0 15 8.8"><g transform="translate(0.1 0.5)"><path d="M2.700 .2h8.600L13.800 4H.2z" fill="#ececec"/><rect x=".5" y="3.900" width="13" height="3.300" rx=".8" fill="#6b6b6b" stroke="#cdcdcd" stroke-width=".7"/><rect x="2.500" y="5" width="1.300" height="1" fill="#35d04a"/></g></svg>
<span class="t" style="left:63.70px;top:686.46px;font-size:11.6px;color:#fff;transform:scaleX(1.0498);">本地磁盘</span>
<div class="clip" style="left:110.00px;top:685.67px;width:24.00px;height:20px;"><span class="t" style="left:6.40px;top:0;font-size:12.5px;color:#fff;transform:scaleX(0.9312);">(F:)</span></div>
<svg style="left:20px;top:722px" width="11" height="13" viewBox="0 0 11 13"><g transform="translate(0.8 0.4)"><path d="M3.27 2.11L6.73 6L3.27 9.89" fill="none" stroke="#7c7c7c" stroke-width="1.7" stroke-linecap="round" stroke-linejoin="round"/></g></svg>
<svg style="left:44px;top:724px" width="15" height="8.8" viewBox="0 0 15 8.8"><g transform="translate(0.1 0.5)"><path d="M2.700 .2h8.600L13.800 4H.2z" fill="#ececec"/><rect x=".5" y="3.900" width="13" height="3.300" rx=".8" fill="#6b6b6b" stroke="#cdcdcd" stroke-width=".7"/><rect x="2.500" y="5" width="1.300" height="1" fill="#35d04a"/></g></svg>
<span class="t" style="left:63.70px;top:718.46px;font-size:11.6px;color:#fff;transform:scaleX(1.0498);">本地磁盘</span>
<div class="clip" style="left:110.00px;top:717.67px;width:24.00px;height:20px;"><span class="t" style="left:6.40px;top:0;font-size:12.5px;color:#fff;transform:scaleX(0.9335);">(G:)</span></div>
<svg style="left:12px;top:754px" width="11" height="13" viewBox="0 0 11 13"><g transform="translate(0.8 0.4)"><path d="M3.27 2.11L6.73 6L3.27 9.89" fill="none" stroke="#7c7c7c" stroke-width="1.7" stroke-linecap="round" stroke-linejoin="round"/></g></svg>
<svg style="left:34px;top:752px" width="18" height="17" viewBox="0 0 18 17"><g transform="translate(0.6 0)"><defs><linearGradient id="g12" x1="0" y1="0" x2="1" y2="1"><stop offset="0" stop-color="#43c6ee"/><stop offset="1" stop-color="#1583cc"/></linearGradient></defs><rect x="2.1" y="3.1" width="14.4" height="9.6" rx="1" fill="url(#g12)"/><rect x="8.6" y="12.7" width="1.5" height="2.4" fill="#8e9aa8"/><rect x="5.2" y="14.8" width="8.2" height="1.1" rx=".4" fill="#c4ccd6"/><circle cx="4.7" cy="4" r="4.5" fill="#4c9fdc"/><path d="M1.3 2c1.500-.5 2.600.3 2.800 1.500s1.600 1 1.400 2.300-1.500 1.900-2.300 2.400A4.500 4.500 0 0 1 1.300 2z" fill="#d9f0e4"/><path d="M5.600-.3c1.600.3 2.900 1.400 3.400 3-1.100-.1-2-.7-2.700-1.500z" fill="#d9f0e4"/></g></svg>
<span class="t" style="left:55.90px;top:749.67px;font-size:12.3px;color:#fff;transform:scaleX(0.9752);">网络</span>
<div style="left:142px;top:184.5px;width:2.4px;height:635px;background:#9c9c9c;border-radius:1.2px"></div>
<span class="t" style="left:184.50px;top:140.06px;font-size:11.5px;color:#e4e4e4;transform:scaleX(1.0783);">名称</span>
<svg style="left:296px;top:133px" width="13" height="11" viewBox="0 0 13 11"><g transform="translate(0.8 0.3)"><path d="M2.30 7.20L6 2.80L9.70 7.20" fill="none" stroke="#d0d0d0" stroke-width="1.05" stroke-linecap="round" stroke-linejoin="round"/></g></svg>
<div style="left:426px;top:136px;width:1px;height:27px;background:#5e5e5e;"></div>
<div style="left:570px;top:136px;width:1px;height:27px;background:#5e5e5e;"></div>
<div style="left:690px;top:136px;width:1px;height:27px;background:#5e5e5e;"></div>
<div style="left:770px;top:136px;width:1px;height:27px;background:#5e5e5e;"></div>
<span class="t" style="left:432.80px;top:140.06px;font-size:11.5px;color:#e4e4e4;transform:scaleX(1.0565);">修改日期</span>
<span class="t" style="left:576.60px;top:140.06px;font-size:11.5px;color:#e4e4e4;transform:scaleX(1.0696);">类型</span>
<span class="t" style="left:696.40px;top:140.06px;font-size:11.5px;color:#e4e4e4;transform:scaleX(1.0522);">大小</span>
<svg style="left:173px;top:175px" width="17" height="13" viewBox="0 0 17 13"><defs><linearGradient id="g13" x1="0" y1="0" x2="0" y2="1"><stop offset="0" stop-color="#1286e0"/><stop offset="1" stop-color="#0868bc"/></linearGradient></defs><rect width="16" height="12" fill="#a2a2a2"/><rect x=".5" y=".4" width="15" height="1.6" fill="#8c8c8c"/><rect x="1" y="1.1" width="9.6" height=".7" fill="#666"/><rect x="11.6" y="1" width="1" height=".8" fill="#5e5e5e"/><rect x="13.8" y="1" width="1" height=".8" fill="#5e5e5e"/><rect x=".8" y="2.2" width="14.4" height="9" fill="#fff"/><rect x="1.9" y="3" width="2" height="1" fill="#6e6e6e"/><rect x="1.9" y="5" width="2" height="1" fill="#6e6e6e"/><rect x="1.9" y="7" width="2" height="1" fill="#6e6e6e"/><rect x="1.9" y="9" width="2" height="1" fill="#6e6e6e"/><rect x="11.9" y="3" width="2" height="1" fill="#6e6e6e"/><rect x="11.9" y="5" width="2" height="1" fill="#6e6e6e"/><rect x="5.1" y="3.1" width="5.8" height="6.9" fill="url(#g13)"/></svg>
<span class="t" style="left:193.00px;top:172.07px;font-size:12.6px;color:#fff;transform:scaleX(1.0354);">frpc.exe</span>
<span class="t" style="left:433.00px;top:172.07px;font-size:12.6px;color:#fff;transform:scaleX(1.0269);">2023/8/25 19:57</span>
<span class="t" style="left:576.60px;top:172.06px;font-size:11.5px;color:#fff;transform:scaleX(1.0630);">应用程序</span>
<span class="t" style="left:705.10px;top:172.07px;font-size:12.6px;color:#fff;transform:scaleX(0.9842);">14,109 KB</span>
<svg style="left:173px;top:201px" width="15" height="17" viewBox="0 0 15 17"><g transform="translate(0.1 0)"><path d="M2 0H10.400L14 3.600V16H2z" fill="#f6f6f6"/><path d="M10.400 0V3.600H14z" fill="#cfcfcf"/><path d="M9.63 9.80L9.63 11.40L8.22 11.32L7.79 12.37L8.84 13.31L7.71 14.44L6.77 13.39L5.72 13.82L5.80 15.23L4.20 15.23L4.28 13.82L3.23 13.39L2.29 14.44L1.16 13.31L2.21 12.37L1.78 11.32L0.37 11.40L0.37 9.80L1.78 9.88L2.21 8.83L1.16 7.89L2.29 6.76L3.23 7.81L4.28 7.38L4.20 5.97L5.80 5.97L5.72 7.38L6.77 7.81L7.71 6.76L8.84 7.89L7.79 8.83L8.22 9.88z" fill="#efefef" stroke="#8a8a8a" stroke-width=".8"/><circle cx="5.0" cy="10.6" r="2.500" fill="#b9b9b9"/><circle cx="5.0" cy="10.6" r="1.400" fill="#fafafa" stroke="#808080" stroke-width=".6"/></g></svg>
<span class="t" style="left:193.00px;top:200.07px;font-size:12.6px;color:#fff;transform:scaleX(1.0622);">frpc.ini</span>
<span class="t" style="left:433.00px;top:200.07px;font-size:12.6px;color:#fff;transform:scaleX(1.0346);">2024/10/7 15:46</span>
<span class="t" style="left:576.60px;top:200.06px;font-size:11.5px;color:#fff;transform:scaleX(1.0630);">配置设置</span>
<span class="t" style="left:736.30px;top:200.07px;font-size:12.6px;color:#fff;transform:scaleX(0.9776);">1 KB</span>
<svg style="left:173px;top:229px" width="15" height="17" viewBox="0 0 15 17"><g transform="translate(0.1 0)"><path d="M2 0H10.400L14 3.600V16H2z" fill="#f6f6f6"/><path d="M10.400 0V3.600H14z" fill="#cfcfcf"/><path d="M9.63 9.80L9.63 11.40L8.22 11.32L7.79 12.37L8.84 13.31L7.71 14.44L6.77 13.39L5.72 13.82L5.80 15.23L4.20 15.23L4.28 13.82L3.23 13.39L2.29 14.44L1.16 13.31L2.21 12.37L1.78 11.32L0.37 11.40L0.37 9.80L1.78 9.88L2.21 8.83L1.16 7.89L2.29 6.76L3.23 7.81L4.28 7.38L4.20 5.97L5.80 5.97L5.72 7.38L6.77 7.81L7.71 6.76L8.84 7.89L7.79 8.83L8.22 9.88z" fill="#efefef" stroke="#8a8a8a" stroke-width=".8"/><circle cx="5.0" cy="10.6" r="2.500" fill="#b9b9b9"/><circle cx="5.0" cy="10.6" r="1.400" fill="#fafafa" stroke="#808080" stroke-width=".6"/></g></svg>
<span class="t" style="left:193.00px;top:228.07px;font-size:12.6px;color:#fff;transform:scaleX(1.0132);">frpc_full.ini</span>
<span class="t" style="left:433.00px;top:228.07px;font-size:12.6px;color:#fff;transform:scaleX(1.0193);">2023/8/25 20:01</span>
<span class="t" style="left:576.60px;top:228.06px;font-size:11.5px;color:#fff;transform:scaleX(1.0630);">配置设置</span>
<span class="t" style="left:729.40px;top:228.07px;font-size:12.6px;color:#fff;transform:scaleX(0.9792);">13 KB</span>
<svg style="left:173px;top:259px" width="17" height="13" viewBox="0 0 17 13"><defs><linearGradient id="g14" x1="0" y1="0" x2="0" y2="1"><stop offset="0" stop-color="#1286e0"/><stop offset="1" stop-color="#0868bc"/></linearGradient></defs><rect width="16" height="12" fill="#a2a2a2"/><rect x=".5" y=".4" width="15" height="1.6" fill="#8c8c8c"/><rect x="1" y="1.1" width="9.6" height=".7" fill="#666"/><rect x="11.6" y="1" width="1" height=".8" fill="#5e5e5e"/><rect x="13.8" y="1" width="1" height=".8" fill="#5e5e5e"/><rect x=".8" y="2.2" width="14.4" height="9" fill="#fff"/><rect x="1.9" y="3" width="2" height="1" fill="#6e6e6e"/><rect x="1.9" y="5" width="2" height="1" fill="#6e6e6e"/><rect x="1.9" y="7" width="2" height="1" fill="#6e6e6e"/><rect x="1.9" y="9" width="2" height="1" fill="#6e6e6e"/><rect x="11.9" y="3" width="2" height="1" fill="#6e6e6e"/><rect x="11.9" y="5" width="2" height="1" fill="#6e6e6e"/><rect x="5.1" y="3.1" width="5.8" height="6.9" fill="url(#g14)"/></svg>
<span class="t" style="left:193.00px;top:256.07px;font-size:12.6px;color:#fff;transform:scaleX(1.0354);">frps.exe</span>
<span class="t" style="left:433.00px;top:256.07px;font-size:12.6px;color:#fff;transform:scaleX(1.0269);">2023/8/25 19:57</span>
<span class="t" style="left:576.60px;top:256.06px;font-size:11.5px;color:#fff;transform:scaleX(1.0630);">应用程序</span>
<span class="t" style="left:705.10px;top:256.07px;font-size:12.6px;color:#fff;transform:scaleX(0.9842);">16,946 KB</span>
<svg style="left:173px;top:285px" width="15" height="17" viewBox="0 0 15 17"><g transform="translate(0.1 0)"><path d="M2 0H10.400L14 3.600V16H2z" fill="#f6f6f6"/><path d="M10.400 0V3.600H14z" fill="#cfcfcf"/><path d="M9.63 9.80L9.63 11.40L8.22 11.32L7.79 12.37L8.84 13.31L7.71 14.44L6.77 13.39L5.72 13.82L5.80 15.23L4.20 15.23L4.28 13.82L3.23 13.39L2.29 14.44L1.16 13.31L2.21 12.37L1.78 11.32L0.37 11.40L0.37 9.80L1.78 9.88L2.21 8.83L1.16 7.89L2.29 6.76L3.23 7.81L4.28 7.38L4.20 5.97L5.80 5.97L5.72 7.38L6.77 7.81L7.71 6.76L8.84 7.89L7.79 8.83L8.22 9.88z" fill="#efefef" stroke="#8a8a8a" stroke-width=".8"/><circle cx="5.0" cy="10.6" r="2.500" fill="#b9b9b9"/><circle cx="5.0" cy="10.6" r="1.400" fill="#fafafa" stroke="#808080" stroke-width=".6"/></g></svg>
<span class="t" style="left:193.00px;top:284.07px;font-size:12.6px;color:#fff;transform:scaleX(1.0622);">frps.ini</span>
<span class="t" style="left:433.00px;top:284.07px;font-size:12.6px;color:#fff;transform:scaleX(1.0193);">2023/8/25 20:01</span>
<span class="t" style="left:576.60px;top:284.06px;font-size:11.5px;color:#fff;transform:scaleX(1.0630);">配置设置</span>
<span class="t" style="left:736.30px;top:284.07px;font-size:12.6px;color:#fff;transform:scaleX(0.9776);">1 KB</span>
<svg style="left:173px;top:313px" width="15" height="17" viewBox="0 0 15 17"><g transform="translate(0.1 0)"><path d="M2 0H10.400L14 3.600V16H2z" fill="#f6f6f6"/><path d="M10.400 0V3.600H14z" fill="#cfcfcf"/><path d="M9.63 9.80L9.63 11.40L8.22 11.32L7.79 12.37L8.84 13.31L7.71 14.44L6.77 13.39L5.72 13.82L5.80 15.23L4.20 15.23L4.28 13.82L3.23 13.39L2.29 14.44L1.16 13.31L2.21 12.37L1.78 11.32L0.37 11.40L0.37 9.80L1.78 9.88L2.21 8.83L1.16 7.89L2.29 6.76L3.23 7.81L4.28 7.38L4.20 5.97L5.80 5.97L5.72 7.38L6.77 7.81L7.71 6.76L8.84 7.89L7.79 8.83L8.22 9.88z" fill="#efefef" stroke="#8a8a8a" stroke-width=".8"/><circle cx="5.0" cy="10.6" r="2.500" fill="#b9b9b9"/><circle cx="5.0" cy="10.6" r="1.400" fill="#fafafa" stroke="#808080" stroke-width=".6"/></g></svg>
<span class="t" style="left:193.00px;top:312.07px;font-size:12.6px;color:#fff;transform:scaleX(1.0132);">frps_full.ini</span>
<span class="t" style="left:433.00px;top:312.07px;font-size:12.6px;color:#fff;transform:scaleX(1.0193);">2023/8/25 20:01</span>
<span class="t" style="left:576.60px;top:312.06px;font-size:11.5px;color:#fff;transform:scaleX(1.0630);">配置设置</span>
<span class="t" style="left:735.60px;top:312.07px;font-size:12.6px;color:#fff;">6 KB</span>
<svg style="left:175px;top:341px" width="13" height="17" viewBox="0 0 13 17"><g transform="translate(0.1 0)"><path d="M0 0H8.400L12 3.600V16H0z" fill="#f6f6f6"/><path d="M8.400 0V3.600H12z" fill="#cfcfcf"/></g></svg>
<span class="t" style="left:193.00px;top:340.07px;font-size:12.6px;color:#fff;transform:scaleX(0.9053);">LICENSE</span>
<span class="t" style="left:433.00px;top:340.07px;font-size:12.6px;color:#fff;transform:scaleX(1.0193);">2023/8/25 20:01</span>
<span class="t" style="left:576.60px;top:340.06px;font-size:11.5px;color:#fff;transform:scaleX(1.0696);">文件</span>
<span class="t" style="left:729.40px;top:340.07px;font-size:12.6px;color:#fff;transform:scaleX(0.9792);">12 KB</span>
<svg style="left:173px;top:371px" width="17" height="13" viewBox="0 0 17 13"><rect width="16" height="12" fill="#a2a2a2"/><rect x=".5" y=".4" width="15" height="1.6" fill="#8c8c8c"/><rect x="1" y="1.1" width="9.6" height=".7" fill="#666"/><rect x="11.6" y="1" width="1" height=".8" fill="#5e5e5e"/><rect x="13.8" y="1" width="1" height=".8" fill="#5e5e5e"/><rect x=".8" y="2.2" width="14.4" height="9" fill="#fdfdfd"/><path d="M9.94 4.80L9.94 6.00L9.13 5.94L8.89 6.52L9.50 7.06L8.66 7.90L8.12 7.29L7.54 7.53L7.60 8.34L6.40 8.34L6.46 7.53L5.88 7.29L5.34 7.90L4.50 7.06L5.11 6.52L4.87 5.94L4.06 6.00L4.06 4.80L4.87 4.86L5.11 4.28L4.50 3.74L5.34 2.90L5.88 3.51L6.46 3.27L6.40 2.46L7.60 2.46L7.54 3.27L8.12 3.51L8.66 2.90L9.50 3.74L8.89 4.28L9.13 4.86z" fill="#a3a9a9"/><circle cx="7" cy="5.4" r="1.2" fill="#dfe4e4"/><path d="M9.97 7.28L9.97 7.92L9.56 7.90L9.24 8.46L9.46 8.80L8.91 9.12L8.72 8.76L8.08 8.76L7.89 9.12L7.34 8.80L7.56 8.46L7.24 7.90L6.83 7.92L6.83 7.28L7.24 7.30L7.56 6.74L7.34 6.40L7.89 6.08L8.08 6.44L8.72 6.44L8.91 6.08L9.46 6.40L9.24 6.74L9.56 7.30z" fill="#8f9595"/><circle cx="9.5" cy="8.8" r="1.35" fill="#fff" stroke="#4e4e4e" stroke-width=".9"/></svg>
<span class="t" style="left:193.00px;top:368.07px;font-size:12.6px;color:#fff;transform:scaleX(1.0659);">start.bat</span>
<span class="t" style="left:433.00px;top:368.07px;font-size:12.6px;color:#fff;transform:scaleX(1.0387);">2024/8/7 10:54</span>
<span class="t" style="left:576.80px;top:368.07px;font-size:12.6px;color:#fff;transform:scaleX(1.0373);">Windows</span>
<span class="t" style="left:633.20px;top:368.06px;font-size:11.5px;color:#fff;transform:scaleX(1.0638);">批处理</span>
<span class="t" style="left:670.70px;top:368.07px;font-size:12.6px;color:#fff;transform:scaleX(0.7619);">...</span>
<span class="t" style="left:736.30px;top:368.07px;font-size:12.6px;color:#fff;transform:scaleX(0.9776);">1 KB</span>
<div class="clip" style="left:1095.00px;top:520.27px;width:63.00px;height:20px;"><span class="t" style="left:6.50px;top:0;font-size:20px;color:rgba(255,255,255,.05);transform:scaleX(1.0290);font-family:'Noto Serif CJK SC','Noto Sans CJK SC',serif;font-weight:900;letter-spacing:3px;">凤凰花</span></div>
<div style="left:0px;top:837px;width:1159px;height:27px;background:#1c1c1c;"></div>
<span class="t" style="left:15.00px;top:840.27px;font-size:12.5px;color:#fff;transform:scaleX(1.0067);">8</span>
<span class="t" style="left:25.50px;top:840.06px;font-size:11.8px;color:#fff;transform:scaleX(1.0111);">个项目</span>
<div style="left:72px;top:843px;width:1px;height:14px;background:#e6e6e6;"></div>
<div style="left:1102px;top:837px;width:26px;height:27px;background:#4d4d4d;"></div>
<svg style="left:1108px;top:843px" width="17" height="17" viewBox="0 0 17 17"><g transform="translate(0 0.1)"><rect width="16" height="16" rx="2.200" fill="#c6c6c6"/><path d="M2.300 3.500H13.700M2.300 6.500H13.700M2.300 9.500H13.700M2.300 12.500H13.700" stroke="#000" stroke-width="1"/></g></svg>
<svg style="left:1133px;top:842px" width="17" height="17" viewBox="0 0 17 17"><rect width="16" height="16" rx="2.200" fill="#c6c6c6"/><rect x="2" y="2" width="12" height="9.600" rx=".8" fill="#000"/><rect x="3.100" y="3.100" width="9.800" height="7.400" fill="#fff"/><path d="M2.400 13.500H13.600" stroke="#000" stroke-width="1"/></svg>
</div></div>
</body>
</html>
